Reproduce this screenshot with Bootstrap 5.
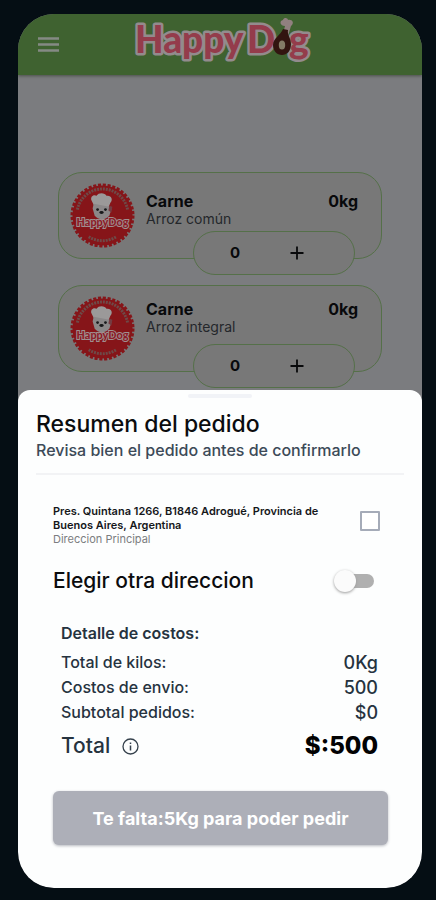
<!DOCTYPE html>
<html lang="es">
<head>
<meta charset="utf-8">
<meta name="viewport" content="width=device-width, initial-scale=1">
<title>Happy Dog - Resumen del pedido</title>
<link href="https://cdn.jsdelivr.net/npm/bootstrap@5.3.0/dist/css/bootstrap.min.css" rel="stylesheet">
<style>
body { background: #050e14; font-family: Inter, "Open Sans", sans-serif; color: #0b0c0e; }
.device { margin: 14px 14px 12px 18px; border-radius: 36px; background: #7b7c7f; }
.topbar { height: 61px; background: #3f6230; padding: 0 20px; box-shadow: 0 1px 3px #4b4f4b; }
.menu-btn { line-height: 0; }
.brand { width: 184px; margin-right: 90px; }
.brand text { font: 900 37px Lato, sans-serif; fill: #943c4b; stroke: #938b8d; stroke-width: 5px; stroke-linejoin: round; paint-order: stroke; }
.products { padding: 97px 40px 30px; gap: 26px; }
.product { min-height: 87px; border: 1px solid #557049; border-radius: 24px; background: #787878; padding: 10px 23px 10px 11px; gap: 11px; color: #08090b; }
.product-text { padding-top: 3px; }
.product-tall .product-text { padding-top: 8px; }
.product-name { font-size: 16px; line-height: 20px; font-weight: 700; }
.product-kind { font-size: 14px; line-height: 16px; color: #24272b; }
.stepper { right: 26px; bottom: -17px; width: 162px; height: 44px; border: 1px solid #557049; border-radius: 22px; background: #787878; font-size: 15px; font-weight: 700; padding: 0 50px 0 36px; }
.plus-btn { line-height: 0; color: #08090b; }
.stamp-word { font: 900 11px Lato, sans-serif; fill: #8c1c28; stroke: #a08f90; stroke-width: 2px; paint-order: stroke; }
.sheet { margin-top: -12px; padding: 4px 18px 43px; border-radius: 12px 12px 36px 36px; background: #fdfefe; }
.grip { width: 64px; height: 4px; border-radius: 2px; background: #f1f3f7; }
.sheet-title { margin-top: 12px; font-size: 23px; line-height: 28px; font-weight: 500; }
.sheet-sub { font-size: 16px; line-height: 24px; font-weight: 500; color: #3c4a58; }
.rule { height: 2px; margin-top: 11px; background: #f2f3f5; }
.sheet-body { padding: 29px 16px 0 17px; }
.address { max-width: 290px; font-size: 11px; line-height: 14px; font-weight: 600; color: #15171a; }
.address-tag { font-weight: 400; color: #7b7d80; }
.pick.form-check-input[type=checkbox] { width: 20px; height: 20px; margin: 7px 8px 0 0; border: 2px solid #a5abb8; border-radius: 1px; }
.other { margin: 21px 14px 0 0; font-size: 21px; line-height: 28px; font-weight: 500; }
.toggle { appearance: none; width: 32px; height: 14px; border-radius: 7px; background: #b0b0b0; }
.toggle::before { content: ""; display: block; width: 22px; height: 22px; margin: -4px 0 0 -8px; border-radius: 50%; background: #fbfbfb; box-shadow: 0 1px 3px #9a9a9a; }
.toggle:checked::before { margin-left: 18px; }
.costs { margin: 26px 10px 0 8px; color: #26333f; font-size: 16px; line-height: 25px; font-weight: 500; }
.costs-title { line-height: 24px; font-weight: 600; margin-bottom: 5px; font-size: 16px; }
.amount { font-size: 18px; }
.total-row { line-height: 42px; font-size: 21px; }
.total-amount { font-size: 24px; font-weight: 800; color: #020203; }
.order-btn { height: 54px; margin-top: 24px; border: 0; border-radius: 6px; background: #adafb8; color: #fff; font-size: 18px; font-weight: 700; box-shadow: 0 1px 3px #b6b8be; }
</style>
<script src="https://cdn.jsdelivr.net/npm/bootstrap@5.3.0/dist/js/bootstrap.bundle.min.js"></script>
</head>
<body>
<svg width="0" height="0" class="d-block" aria-hidden="true">
  <defs>
    <symbol id="stamp" viewBox="0 0 66 66">
      <circle cx="33" cy="33" r="30.5" fill="#861519"/>
      <circle cx="33" cy="33" r="31" fill="none" stroke="#861519" stroke-width="3" stroke-dasharray="3.2 1.67"/>
      <path d="M7.500 27A26 26 0 0 1 58.500 27" fill="none" stroke="#6e4a48" stroke-width="3" stroke-dasharray="2 1"/>
      <path d="M19 54.500A26 26 0 0 0 47 54.500" fill="none" stroke="#6e4a48" stroke-width="3" stroke-dasharray="2 1"/>
      <path d="M24 22l-2-4c-2-4 2-7 5-5 2-4 9-3 10 0 5-1 7 4 4 7l-2 5z" fill="#9b9999"/>
      <path d="M24 21l16 3 2 3-2 6c-3 5-12 5-15 0l-2-7z" fill="#8b8889"/>
      <path d="M40 23l3 1-1 6-3-2z" fill="#743c42"/>
      <circle cx="28" cy="27" r="1.400" fill="#18191b"/><circle cx="36" cy="27" r="1.400" fill="#18191b"/>
      <ellipse cx="32" cy="30" rx="2.200" ry="1.500" fill="#18191b"/>
    </symbol>
  </defs>
</svg>

<div class="device overflow-hidden">
  <header class="topbar d-flex align-items-center justify-content-between position-relative">
    <button class="menu-btn btn p-0 border-0" type="button" aria-label="Menú">
      <svg width="21" height="15" viewBox="0 0 21 15"><path d="M0 1.500h21M0 7.500h21M0 13.500h21" stroke="#858a84" stroke-width="2.400"/></svg>
    </button>
    <svg class="brand" height="61" viewBox="0 0 184 61" role="img" aria-label="Happy Dog">
      <text x="7" y="39">Happy</text>
      <text x="119" y="39">D</text>
      <text x="161" y="39">g</text>
      <path d="M155 20l2-8c-5 0-6-5-2-6 1-3 5-2 5 0 4-1 7 3 3 6l-3 10z" fill="#91807f"/>
      <path d="M155 15l5 1c-1 5 3 8 3 14 0 7-4 11-9 11s-9-4-9-10c0-7 8-10 10-16z" fill="#321410"/>
      <ellipse cx="154" cy="31" rx="3.200" ry="4.500" fill="#847b66"/>
    </svg>
  </header>

  <main class="products d-flex flex-column">
    <article class="product product-tall d-flex align-items-start position-relative">
      <svg class="flex-shrink-0" width="65" height="65" viewBox="0 0 66 66"><use href="#stamp"/><text class="stamp-word" x="33" y="44" text-anchor="middle">HappyDog</text></svg>
      <div class="product-text flex-grow-1">
        <div class="product-name d-flex justify-content-between"><span>Carne</span><span>0kg</span></div>
        <div class="product-kind">Arroz común</div>
      </div>
      <div class="stepper position-absolute d-flex align-items-center justify-content-between">
        <span>0</span>
        <button class="plus-btn btn p-0 border-0" type="button" aria-label="Agregar"><svg width="14" height="14" viewBox="0 0 14 14"><path d="M7 .5v13M.5 7h13" stroke="currentColor" stroke-width="1.800"/></svg></button>
      </div>
    </article>
    <article class="product d-flex align-items-start position-relative">
      <svg class="flex-shrink-0" width="65" height="65" viewBox="0 0 66 66"><use href="#stamp"/><text class="stamp-word" x="33" y="44" text-anchor="middle">HappyDog</text></svg>
      <div class="product-text flex-grow-1">
        <div class="product-name d-flex justify-content-between"><span>Carne</span><span>0kg</span></div>
        <div class="product-kind">Arroz integral</div>
      </div>
      <div class="stepper position-absolute d-flex align-items-center justify-content-between">
        <span>0</span>
        <button class="plus-btn btn p-0 border-0" type="button" aria-label="Agregar"><svg width="14" height="14" viewBox="0 0 14 14"><path d="M7 .5v13M.5 7h13" stroke="currentColor" stroke-width="1.800"/></svg></button>
      </div>
    </article>
  </main>

  <section class="sheet position-relative">
    <div class="grip mx-auto"></div>
    <h1 class="sheet-title mb-0">Resumen del pedido</h1>
    <p class="sheet-sub mb-0">Revisa bien el pedido antes de confirmarlo</p>
    <div class="rule"></div>
    <div class="sheet-body">
      <div class="d-flex justify-content-between align-items-start">
        <label class="address" for="main-address">Pres. Quintana 1266, B1846 Adrogué, Provincia de Buenos Aires, Argentina<span class="address-tag d-block">Direccion Principal</span></label>
        <input class="pick form-check-input flex-shrink-0" type="checkbox" id="main-address">
      </div>
      <div class="other d-flex justify-content-between align-items-center">
        <label for="other-address">Elegir otra direccion</label>
        <input class="toggle flex-shrink-0" type="checkbox" role="switch" id="other-address">
      </div>
      <div class="costs">
        <h2 class="costs-title">Detalle de costos:</h2>
        <div class="d-flex justify-content-between"><span>Total de kilos:</span><span class="amount">0Kg</span></div>
        <div class="d-flex justify-content-between"><span>Costos de envio:</span><span class="amount">500</span></div>
        <div class="d-flex justify-content-between"><span>Subtotal pedidos:</span><span class="amount">$0</span></div>
        <div class="total-row d-flex justify-content-between align-items-center">
          <span class="d-flex align-items-center gap-2">Total
            <svg class="ms-1" width="17" height="17" viewBox="0 0 17 17" fill="none" stroke="#35414c"><circle cx="8.500" cy="8.500" r="7.500" stroke-width="1.300"/><path d="M8.500 7.500v5M8.500 4.500v1.600" stroke-width="1.500"/></svg>
          </span>
          <span class="total-amount">$:500</span>
        </div>
      </div>
      <button class="order-btn btn w-100" type="button">Te falta:5Kg para poder pedir</button>
    </div>
  </section>
</div>
</body>
</html>
